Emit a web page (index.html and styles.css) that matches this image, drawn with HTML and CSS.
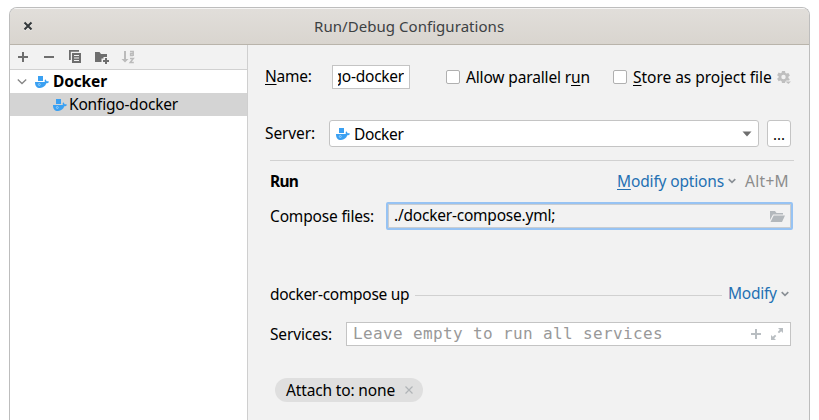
FILE: index.html
```
<!DOCTYPE html>
<html lang="en">
<head>
<meta charset="utf-8">
<title>Run/Debug Configurations</title>
<link rel="stylesheet" href="styles.css">
</head>
<body>
<svg class="defs" width="0" height="0">
  <symbol id="docker" viewBox="0 0 14 12">
    <path fill="#3aa0f2" d="M3 0h5v5H3zM0 6h9.800c-.3-.9-.2-1.800.3-2.700.9.500 1.300 1.200 1.400 2 .8-.1 1.700 0 2.500.5-.5 1.100-1.500 1.500-2.700 1.500C10.300 10 8.300 12 5 12 1.700 12 0 10 0 6z"/>
    <circle cx="4.300" cy="8.500" r="1" fill="none" stroke="#b5dcfa" stroke-width=".7"/>
  </symbol>
  <symbol id="chevron" viewBox="0 0 8 6">
    <path fill="none" stroke="#8a9096" stroke-width="1.700" d="M.7 1.200 4 4.300l3.300-3.100"/>
  </symbol>
</svg>
<div class="window">
  <header class="titlebar">
    <svg class="close" width="10" height="10" viewBox="0 0 10 10"><path stroke="#fff" stroke-opacity=".6" stroke-width="2" d="m1.500 2.500 7 7m0-7-7 7"/><path stroke="#33383a" stroke-width="2" d="m1.500 1.500 7 7m0-7-7 7"/></svg>
    <h1 class="title">Run/Debug Configurations</h1>
  </header>
  <div class="body">
    <aside class="sidebar">
      <div class="toolbar">
        <svg width="14" height="14" viewBox="0 0 14 14"><path fill="#6e6e6e" d="M6 2h2v4h4v2H8v4H6V8H2V6h4z"/></svg>
        <svg width="14" height="14" viewBox="0 0 14 14"><path fill="#6e6e6e" d="M2 6h10v2H2z"/></svg>
        <svg width="14" height="14" viewBox="0 0 14 14"><path fill="#6e6e6e" d="M1 0h10v1.800H2.800V10H1z"/><path fill="#6e6e6e" fill-rule="evenodd" d="M4 3h9v10H4zM6 5v1h5V5zm0 2.500v1h5v-1zM6 10v1h5v-1z"/></svg>
        <svg width="15" height="14" viewBox="0 0 15 14"><path fill="#6e6e6e" d="M1 2h4.500L7 4h6v3H9.500v1.500H7.500V12H1z"/><path fill="#6e6e6e" d="M11 8h2v2h2v2h-2v2h-2v-2H9v-2h2z"/></svg>
        <svg width="14" height="14" viewBox="0 0 14 14"><path fill="#bbb" d="M3 1h2v8h2.500L4 12.500.5 9H3z"/><path fill="none" stroke="#bbb" stroke-width="1.500" d="M9 1.500h3.200v4.500M12 3.500H9.600v2h2.400M9 8.500h3.300L9.200 12.500h3.600"/></svg>
      </div>
      <div class="tree">
        <div class="node root">
          <svg class="arrow" width="10" height="8" viewBox="0 0 10 8"><path fill="none" stroke="#858585" stroke-width="1.300" d="m.8 1.500 4.200 4 4.200-4"/></svg>
          <svg width="14" height="12"><use href="#docker"/></svg>
          <span class="node-name">Docker</span>
        </div>
        <div class="node child selected">
          <svg width="14" height="12"><use href="#docker"/></svg>
          <span class="node-name">Konfigo-docker</span>
        </div>
      </div>
    </aside>
    <main class="form">
      <div class="row name-row">
        <label class="name-label"><u>N</u>ame:</label>
        <div class="name-input"><span>go-docker</span></div>
        <span class="check"></span>
        <label class="allow-label">Allow parallel r<u>u</u>n</label>
        <span class="check second"></span>
        <label class="store-label"><u>S</u>tore as project file</label>
        <svg class="gear" width="14" height="15" viewBox="0 0 14 15"><path fill="#bfbfbf" fill-rule="evenodd" d="M5 1h3l.4 1.900 1.200.7 1.800-.7 1.500 2.600-1.500 1.200v1.400l1.400 1.200-.8 1.300H9.500l-1.100.8L8 13H5l-.4-1.700-1.200-.7-1.800.7L.1 8.700l1.500-1.300V6.300L.1 5.200l1.500-2.600 1.800.7 1.200-.6zM6.500 4.800a2.200 2.200 0 1 0 0 4.400 2.200 2.200 0 0 0 0-4.400z"/><path fill="#bfbfbf" d="M8.500 11.500H14L11.300 14z"/></svg>
      </div>
      <div class="row server-row">
        <label class="server-label">Server:</label>
        <div class="combo">
          <svg width="14" height="12"><use href="#docker"/></svg>
          <span class="combo-value">Docker</span>
          <svg width="10" height="6" viewBox="0 0 10 6"><path fill="#6e6e6e" d="M.5.500h9L5 5.500z"/></svg>
        </div>
        <button class="more">...</button>
      </div>
      <hr class="rule">
      <div class="row run-row">
        <h2 class="section">Run</h2>
        <a class="link options"><u>M</u>odify options</a>
        <svg width="8" height="6"><use href="#chevron"/></svg>
        <span class="shortcut">Alt+M</span>
      </div>
      <div class="row files-row">
        <label class="files-label">Compose files:</label>
        <div class="files-input">
          <span class="files-value">./docker-compose.yml;</span>
          <svg width="15" height="12" viewBox="0 0 15 12"><path fill="#b3b8bc" d="M0 1h5l1.500 2H13v1.500H3L0 10z"/><path fill="#b3b8bc" d="M3.700 5.500H15L12 12H.5z"/></svg>
        </div>
      </div>
      <div class="row up-row">
        <span class="up-label">docker-compose up</span>
        <span class="line"></span>
        <a class="link modify">Modify</a>
        <svg width="8" height="6"><use href="#chevron"/></svg>
      </div>
      <div class="row services-row">
        <label class="services-label">Services:</label>
        <div class="services-input">
          <span class="placeholder">Leave empty to run all services</span>
          <svg width="10" height="10" viewBox="0 0 10 10"><path fill="#b9bec2" d="M4 0h2v4h4v2H6v4H4V6H0V4h4z"/></svg>
          <svg width="12" height="12" viewBox="0 0 12 12"><path fill="#b9bec2" d="M7 0h5v5l-1.800-1.800L8 5.300 6.700 4l2.100-2.200zM0 7l1.800 1.800L4 6.700 5.300 8l-2.100 2.200L5 12H0z"/></svg>
        </div>
      </div>
      <div class="chip">
        <span class="chip-label">Attach to: none</span>
        <svg width="8" height="8" viewBox="0 0 8 8"><path stroke="#b0b4b7" stroke-width="1.200" d="m.5.500 7 7m0-7-7 7"/></svg>
      </div>
    </main>
  </div>
</div>
</body>
</html>
```
FILE: styles.css
```
* { box-sizing: border-box; }

body {
  margin: 0;
  height: 420px;
  overflow: hidden;
  background: #fff;
  color: #000;
  font: 15.5px/22px "Noto Sans", "Open Sans", sans-serif;
  letter-spacing: -.25px;
  white-space: nowrap;
}

svg { display: block; flex: none; }
.defs { position: absolute; }

u {
  text-decoration: underline;
  text-decoration-thickness: 1px;
  text-underline-offset: 2px;
  text-decoration-skip-ink: none;
}

.window {
  width: 801px;
  height: 413px;
  margin: 7px 0 0 9px;
  border: 1px solid #bdbdbd;
  border-bottom: 0;
  border-radius: 8px 8px 0 0;
  overflow: hidden;
  background: #f2f2f2;
}

.titlebar {
  display: flex;
  align-items: center;
  height: 37px;
  padding-left: 13px;
  border-top: 1px solid #f6f5f4;
  border-bottom: 1px solid #b9b4ab;
  background: linear-gradient(#e1deda, #d9d5cf);
}
.close { margin-top: -2px; }

.title {
  margin: -1px 0 0 281px;
  font-size: 15px;
  font-weight: 400;
  letter-spacing: .05px;
  color: #3c4143;
}

.body { display: flex; height: 375px; }

.sidebar {
  flex: none;
  width: 238px;
  border-right: 1px solid #cfcfcf;
  background: #fff;
}

.toolbar {
  display: flex;
  align-items: center;
  gap: 12px;
  height: 25px;
  padding-left: 6px;
  border-bottom: 1px solid #d1d1d1;
  background: #f2f2f2;
}

.node {
  display: flex;
  align-items: center;
  height: 23px;
}
.node-name { margin-top: -1px; }
.root { padding-left: 7px; font-weight: 700; letter-spacing: -.15px; }
.arrow { margin-right: 8px; }
.root .node-name { margin-left: 4px; }
.child { padding-left: 43px; letter-spacing: -.18px; }
.child .node-name { margin-left: 2px; }
.selected { background: #d4d4d4; }

.form { flex: 1; padding: 20px 0 0 17px; }
.row { display: flex; align-items: center; }

.name-row { height: 24px; }
.name-label { width: 67px; margin-top: -2px; }
.name-input {
  width: 78px;
  height: 24px;
  padding: 0 5px;
  border: 1px solid #c4c4c4;
  background: #fff;
  line-height: 20px;
}
.name-input span {
  display: flex;
  justify-content: flex-end;
  width: 66px;
  overflow: hidden;
}
.check {
  width: 14px;
  height: 14px;
  margin-left: 36px;
  border: 1px solid #b0b0b0;
  border-radius: 2px;
  background: #fff;
}
.check.second { margin-left: 0; }
.allow-label { width: 147px; margin-left: 6px; letter-spacing: -.15px; }
.store-label { width: 144px; margin-left: 6px; letter-spacing: -.03px; }

.server-row { height: 27px; margin-top: 31px; }
.server-label { width: 64px; margin-top: -2px; letter-spacing: -.12px; }
.combo {
  display: flex;
  align-items: center;
  width: 430px;
  height: 27px;
  padding: 0 6px;
  border: 1px solid #c4c4c4;
  border-radius: 3px;
  background: #fff;
}
.combo-value { flex: 1; margin-left: 4px; letter-spacing: -.35px; }
.more {
  width: 24px;
  height: 27px;
  margin-left: 8px;
  padding: 0;
  border: 1px solid #c4c4c4;
  border-radius: 3px;
  background: #fff;
  color: #000;
  font: 15px/22px "Noto Sans", sans-serif;
}

.rule {
  width: 524px;
  height: 1px;
  margin: 13px 0 0 5px;
  border: 0;
  background: #d1d1d1;
}

.run-row { height: 24px; margin: 8px 0 0 5px; }
.section { width: 347px; margin: 0; font-size: 15.5px; letter-spacing: -.7px; }
.link { color: #2470b3; }
.options { width: 111px; letter-spacing: -.15px; }
.shortcut { margin-left: 9px; color: #8c8c8c; letter-spacing: .3px; }

.files-row { height: 28px; margin: 9px 0 0 5px; }
.files-label { width: 116px; letter-spacing: -.17px; }
.files-input {
  display: flex;
  align-items: center;
  justify-content: space-between;
  width: 407px;
  height: 28px;
  padding: 0 6px 0 6px;
  border: 2px solid #97c3f3;
  border-radius: 2px;
  box-shadow: inset 0 0 0 1px #c9cdd1;
}
.files-value { margin-top: -2px; letter-spacing: -.22px; }

.up-row { height: 22px; margin: 53px 0 0 5px; }
.up-label { width: 145px; letter-spacing: -.3px; }
.line { width: 307px; height: 1px; margin-top: 2px; background: #d1d1d1; }
.modify { width: 53px; margin-left: 6px; margin-top: -2px; }

.services-row { height: 24px; margin: 17px 0 0 5px; }
.services-label { width: 76px; letter-spacing: -.15px; }
.services-input {
  display: flex;
  align-items: center;
  width: 445px;
  height: 24px;
  padding: 0 7px 0 6px;
  border: 1px solid #c4c4c4;
  background: #fff;
}
.placeholder {
  width: 398px;
  margin-top: -1px;
  color: #999;
  font: 16px/20px "DejaVu Sans Mono", monospace;
  letter-spacing: .37px;
}
.services-input svg + svg { margin-left: 10px; }

.chip {
  display: flex;
  align-items: center;
  gap: 9px;
  width: 148px;
  height: 24px;
  margin: 32px 0 0 10px;
  padding-left: 11px;
  border-radius: 12px;
  background: #dfdfdf;
}
.chip-label { width: 110px; letter-spacing: -.15px; }
```
